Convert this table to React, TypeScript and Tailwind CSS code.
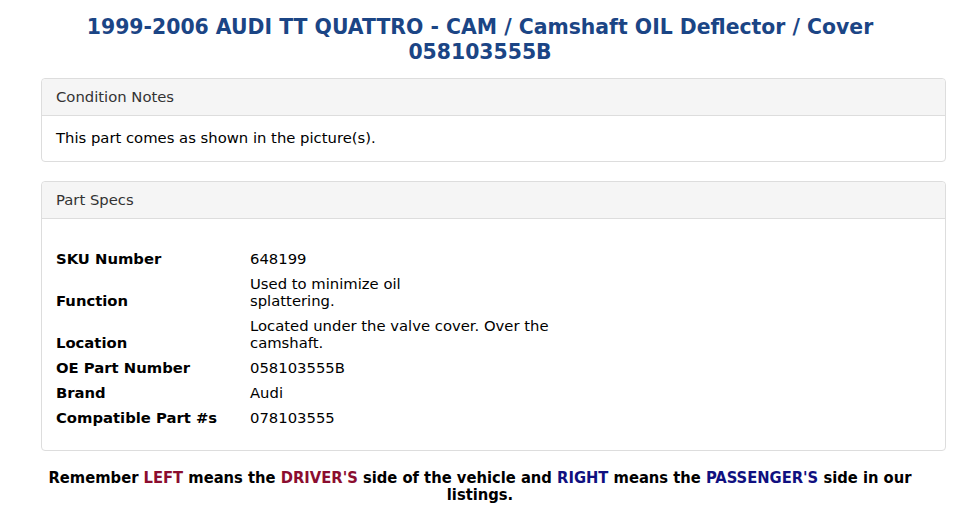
const specs: { label: string; lines: string[] }[] = [
  { label: "SKU Number", lines: ["648199"] },
  { label: "Function", lines: ["Used to minimize oil", "splattering."] },
  { label: "Location", lines: ["Located under the valve cover. Over the", "camshaft."] },
  { label: "OE Part Number", lines: ["058103555B"] },
  { label: "Brand", lines: ["Audi"] },
  { label: "Compatible Part #s", lines: ["078103555"] },
];

const Panel = ({ title, children, bodyClass }: { title: string; children: React.ReactNode; bodyClass: string }) => (
  <div className="ml-[41px] mr-[14px] border border-[#dddddd] rounded-[4px] bg-white">
    <div className="h-[37px] flex items-center px-[14px] bg-[#f5f5f5] border-b border-[#dddddd] rounded-t-[4px] text-[14.8px] text-[#333333]">
      {title}
    </div>
    <div className={bodyClass}>{children}</div>
  </div>
);

export default function App() {
  return (
    <div className="w-[960px] h-[519px] bg-white text-black overflow-hidden" style={{ fontFamily: '"DejaVu Sans", sans-serif' }}>
      <h1 className="pt-[15px] text-center text-[20.4px] leading-[25px] font-bold text-[#1b4585] px-[60px]">
        1999-2006 AUDI TT QUATTRO - CAM / Camshaft OIL Deflector / Cover 058103555B
      </h1>
      <div className="mt-[13px]">
        <Panel title="Condition Notes" bodyClass="h-[45px] flex items-center px-[14px] text-[14.8px]">
          This part comes as shown in the picture(s).
        </Panel>
      </div>
      <div className="mt-[19px]">
        <Panel title="Part Specs" bodyClass="pt-[27px] pb-[20px] px-[14px] text-[14.8px]">
          <table className="border-collapse">
            <tbody>
              {specs.map((s) => (
                <tr key={s.label}>
                  <td className="w-[194px] align-bottom font-bold py-[4px] leading-[17px]">{s.label}</td>
                  <td className="py-[4px] leading-[17px]">
                    {s.lines.map((l) => (
                      <div key={l}>{l}</div>
                    ))}
                  </td>
                </tr>
              ))}
            </tbody>
          </table>
        </Panel>
      </div>
      <p
        className="mt-[18px] px-[40px] text-center font-bold text-[16.4px] leading-[17px]"
        style={{ fontFamily: '"DejaVu Sans Condensed", "DejaVu Sans", sans-serif', fontStretch: "condensed" }}
      >
        Remember <span className="text-[#8b0d2f]">LEFT</span> means the <span className="text-[#8b0d2f]">DRIVER'S</span> side of the vehicle and{" "}
        <span className="text-[#101080]">RIGHT</span> means the <span className="text-[#101080]">PASSENGER'S</span> side in our listings.
      </p>
    </div>
  );
}
